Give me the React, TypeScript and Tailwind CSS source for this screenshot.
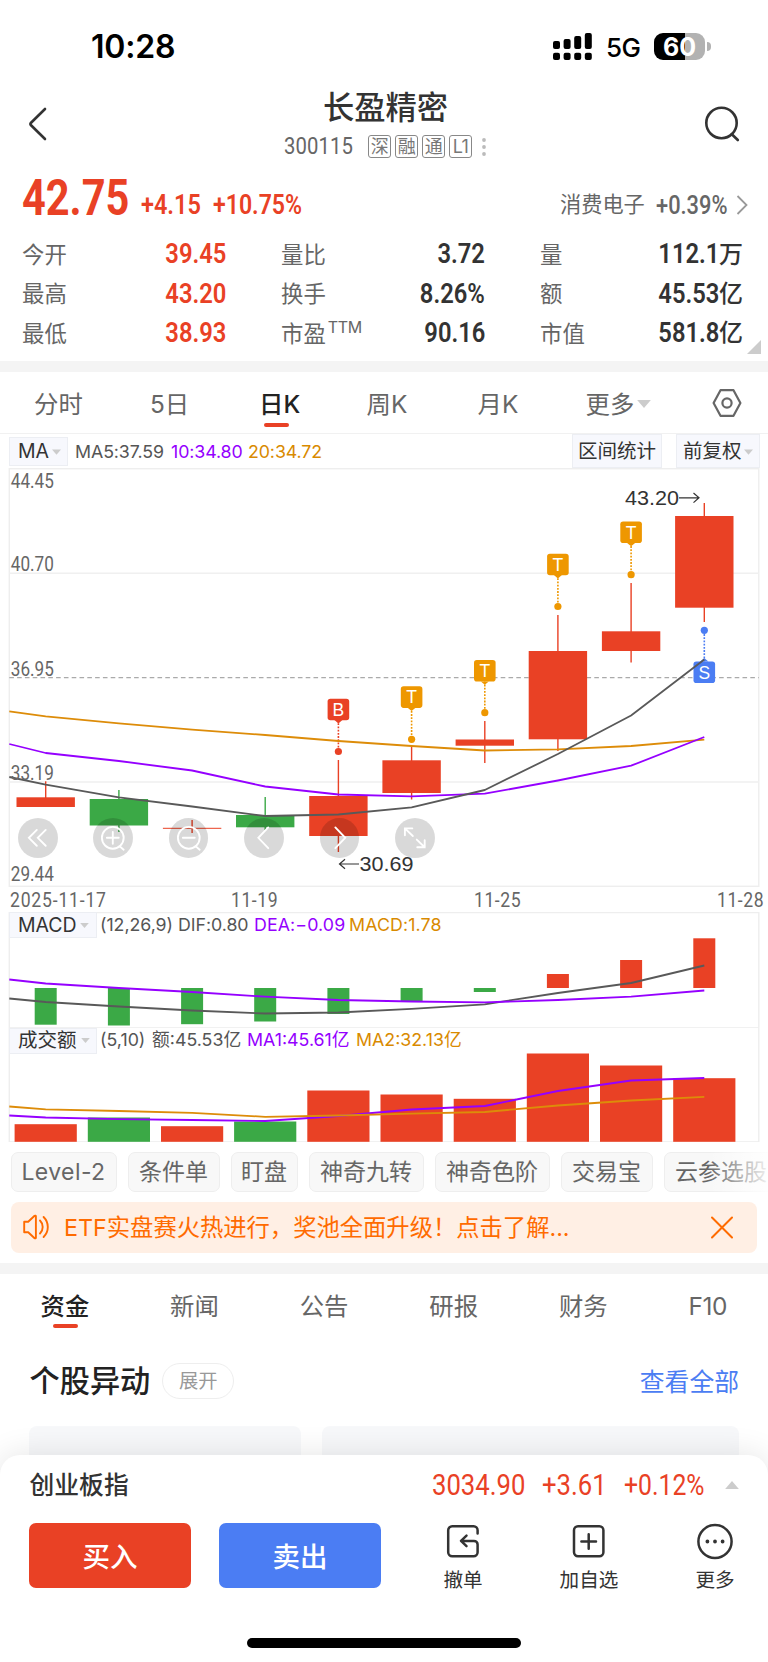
import type { ReactNode } from 'react'
import clsx from 'clsx'

const RED = '#e94125'
const GREEN = '#3ba946'
const ORANGE = '#ee9700'
const BLUE = '#4b7df3'

// center x of every trading day
const days = [45.7, 118.9, 192.1, 265.2, 338.4, 411.6, 484.8, 557.9, 631.1, 704.3]

const candles = [
  { color: RED, top: 797.3, bottom: 807, high: 781.3, low: 807 },
  { color: GREEN, top: 799, bottom: 825.5, high: 790, low: 832 },
  { color: RED, top: 827.8, bottom: 828.8, high: 820, low: 833 },
  { color: GREEN, top: 815, bottom: 827.3, high: 797, low: 830 },
  { color: RED, top: 796, bottom: 836, high: 760, low: 852 },
  { color: RED, top: 760.3, bottom: 793, high: 747, low: 799.5 },
  { color: RED, top: 739.5, bottom: 745.7, high: 721, low: 763 },
  { color: RED, top: 651, bottom: 739.3, high: 615, low: 751 },
  { color: RED, top: 631.3, bottom: 651, high: 583, low: 662.5 },
  { color: RED, top: 516, bottom: 607.7, high: 503, low: 622 },
]

const ma5 = [777, 784.7, 797.3, 806.5, 816, 814.5, 807.3, 790, 754, 715.5, 659.5]
const ma10 = [744, 753, 761, 770.5, 786.5, 794.5, 796.3, 793.7, 780.5, 765.7, 737]
const ma20 = [711.3, 716.3, 723.3, 729.7, 735, 741, 746, 750.5, 749.3, 746, 739.7]

const macd = [1024.7, 1025.5, 1024.2, 1021.5, 1014, 1002, 992, 974, 960, 938.3]
const dea = [979.5, 983.5, 988, 992, 996.7, 1000, 1001.5, 1002.3, 1000, 996.7, 990.5]
const dif = [998.5, 1002, 1006.5, 1010.5, 1013.5, 1012.5, 1008.8, 1004.3, 993, 983, 965.5]

const volume = [1123.7, 1117, 1125.7, 1121, 1090, 1094, 1098.3, 1053, 1065, 1077.7]
const vol5 = [1115, 1117, 1118.7, 1119.5, 1120.5, 1115.5, 1109, 1105.5, 1090.5, 1080, 1077.5]
const vol10 = [1106, 1108.8, 1110.5, 1112.3, 1116.3, 1115, 1113.2, 1111.5, 1105, 1100, 1096.3]

const priceLabels = [
  { text: '44.45', y: 488 },
  { text: '40.70', y: 571.2 },
  { text: '36.95', y: 675.5 },
  { text: '33.19', y: 779.7 },
  { text: '29.44', y: 881 },
]

const markers = [
  { letter: 'B', day: 4, box: 698.7, dot: 751.5, color: RED },
  { letter: 'T', day: 5, box: 686.3, dot: 739.3, color: ORANGE },
  { letter: 'T', day: 6, box: 660, dot: 712.7, color: ORANGE },
  { letter: 'T', day: 7, box: 553.7, dot: 606.5, color: ORANGE },
  { letter: 'T', day: 8, box: 521.5, dot: 574.7, color: ORANGE },
  { letter: 'S', day: 9, box: 661.5, dot: 630.3, color: BLUE },
]

const stats = [
  [
    { label: '今开', value: '39.45' },
    { label: '最高', value: '43.20' },
    { label: '最低', value: '38.93' },
  ],
  [
    { label: '量比', value: '3.72' },
    { label: '换手', value: '8.26%' },
    { label: '市盈', sup: 'TTM', value: '90.16' },
  ],
  [
    { label: '量', value: '112.1', unit: '万' },
    { label: '额', value: '45.53', unit: '亿' },
    { label: '市值', value: '581.8', unit: '亿' },
  ],
]

const periods = [
  { name: '分时', width: 'w-[116px]' },
  { name: '5日', width: 'w-[109px]' },
  { name: '日K', width: 'w-[107.5px]' },
  { name: '周K', width: 'w-[111px]' },
  { name: '月K', width: 'w-[108px]' },
]

const tools = [
  { name: 'Level-2', width: 'w-[106px]' },
  { name: '条件单', width: 'w-[92px]' },
  { name: '盯盘', width: 'w-[67px]' },
  { name: '神奇九转', width: 'w-[115px]' },
  { name: '神奇色阶', width: 'w-[115px]' },
  { name: '交易宝', width: 'w-[92px]' },
  { name: '云参选股', width: 'w-[115px]' },
]

const toPoints = (ys: number[]) => ys.map((y, i) => `${i === 0 ? 9.3 : days[i - 1]},${y}`).join(' ')

function Line({ ys, color }: { ys: number[]; color: string }) {
  return <polyline points={toPoints(ys)} fill="none" stroke={color} strokeWidth="1.8" strokeLinejoin="round" />
}

// condensed digits
function Digits({ children, className, right }: { children: ReactNode; className?: string; right?: boolean }) {
  return (
    <span
      className={clsx(
        "inline-block shrink-0 whitespace-nowrap font-['Roboto','Liberation_Sans',sans-serif]",
        right ? 'origin-right' : 'origin-left',
        className,
      )}
    >
      {children}
    </span>
  )
}

function Caret({ className }: { className?: string }) {
  return (
    <svg className={clsx('shrink-0', className)} viewBox="0 0 12 7" fill="#ccc">
      <path d="M0 0h12L6 7z" />
    </svg>
  )
}

function StatusBar() {
  return (
    <div className="flex h-[92px] items-center pl-[91px] pt-px text-black">
      <span className="w-[462px] text-[32px] font-semibold tracking-[-0.2px]">10:28</span>
      <svg className="h-7 w-10 shrink-0" viewBox="0 0 40 28">
        {[8, 6, 3, 0].map((top, i) => (
          <g key={top}>
            <rect x={i * 10.6} y={top} width="7" height={16 - top} rx="2" />
            <rect x={i * 10.6} y="19.7" width="7" height="7.3" rx="2" />
          </g>
        ))}
      </svg>
      <span className="ml-[13px] w-12 shrink-0 pt-px text-[26px] font-medium tracking-[-0.6px]">5G</span>
      <div className="flex h-[27px] w-[51px] shrink-0 items-center justify-center rounded-[9px] bg-[linear-gradient(90deg,#000_60%,#b2b2b2_60%)] text-[25px] font-bold leading-[32px] text-white">
        60
      </div>
      <div className="ml-[2px] h-[9px] w-[4px] rounded-r-full bg-[#b2b2b2]" />
    </div>
  )
}

function Header() {
  return (
    <header className="flex h-[79px] items-start pl-[28px]">
      <svg className="mt-[14px] h-[36px] w-5" viewBox="0 0 20 36" fill="none" stroke="#333" strokeWidth="2.6" strokeLinecap="round" strokeLinejoin="round">
        <path d="M17 3 2.8 17a1.4 1.4 0 0 0 0 2L17 33" />
      </svg>
      <div className="ml-[236px] flex w-[203px] flex-col">
        <h1 className="h-[30px] pt-px text-center text-[31.3px] font-medium leading-[30px] text-[#333]">长盈精密</h1>
        <div className="flex h-[49px] items-center gap-1 text-[#666]">
          <Digits className="w-[80px] scale-x-[0.86] text-[23.6px] tracking-[0.1px]">300115</Digits>
          {['深', '融', '通', 'L1'].map((tag) => (
            <span
              key={tag}
              className="flex h-[23px] w-[23px] shrink-0 items-center justify-center rounded-[3px] border-[1.5px] border-[#888] text-[18px] leading-none tracking-[-0.5px] text-[#777]"
            >
              {tag}
            </span>
          ))}
          <svg className="ml-[6px] h-5 w-1 shrink-0" viewBox="0 0 4 20" fill="#bbb">
            <circle cx="2" cy="3" r="1.9" />
            <circle cx="2" cy="10" r="1.9" />
            <circle cx="2" cy="17" r="1.9" />
          </svg>
        </div>
      </div>
      <svg className="ml-[217px] mt-[14px] h-[36px] w-[36px]" viewBox="0 0 36 36" fill="none" stroke="#333" strokeWidth="2.6" strokeLinecap="round">
        <circle cx="17.5" cy="17" r="15.2" />
        <path d="m27.8 28.2 6 5.8" />
      </svg>
    </header>
  )
}

function Quote() {
  return (
    <section className="relative h-[190px]">
      <div className="flex h-[52px] items-center pl-[22px]">
        <Digits className="w-[119px] scale-x-[0.83] pt-[3px] text-[50px] font-bold text-[#e94125]">42.75</Digits>
        <Digits className="w-[72px] scale-x-[0.87] pt-[17px] text-[27px] font-semibold text-[#e94125]">+4.15</Digits>
        <Digits className="w-[347px] scale-x-[0.855] pt-[17px] text-[27px] font-semibold text-[#e94125]">+10.75%</Digits>
        <span className="w-[96px] pt-[15px] text-[21.2px] text-[#666]">消费电子</span>
        <Digits className="w-[80px] scale-x-[0.84] pt-[17px] text-[26px] font-medium text-[#666]">+0.39%</Digits>
        <svg className="mt-[16px] h-5 w-3" viewBox="0 0 12 20" fill="none" stroke="#999" strokeWidth="1.8">
          <path d="m1.5 1 9 9-9 9" />
        </svg>
      </div>
      <div className="mt-[12px] grid grid-cols-[204px_204px_203px] gap-x-[55px] pl-[22px]">
        {stats.map((column) => (
          <dl key={column[0].label}>
            {column.map((item) => (
              <div key={item.label} className="flex h-[39.4px] items-center justify-between">
                <dt className="flex text-[22.4px] text-[#666]">
                  {item.label}
                  {'sup' in item && <span className="-mt-[2px] ml-[2px] text-[16px] leading-[24px] tracking-[-0.3px]">{item.sup}</span>}
                </dt>
                <dd className={clsx('flex items-center font-semibold', column === stats[0] ? 'text-[#e94125]' : 'text-[#333]')}>
                  <Digits right className="scale-x-[0.88] text-[27px]">
                    {item.value}
                  </Digits>
                  {'unit' in item && <span className="text-[24px] font-medium">{item.unit}</span>}
                </dd>
              </div>
            ))}
          </dl>
        ))}
      </div>
      <div className="absolute bottom-[7px] right-[7px] h-[14px] w-[14px] bg-[#ccc] [clip-path:polygon(100%_0,100%_100%,0_100%)]" />
    </section>
  )
}

function PeriodTabs() {
  return (
    <nav className="flex h-[62px] items-center border-b-[1.5px] border-[#f1f1f1] pl-[34px] pt-[3px] text-[24.4px] text-[#666]">
      {periods.map(({ name, width }) => (
        <div key={name} className={width}>
          <span className={clsx('relative', name === '日K' && 'font-medium text-[#222]')}>
            {name}
            {name === '日K' && <i className="absolute -bottom-[8px] left-[5px] h-[4px] w-[25px] rounded-full bg-[#e94125]" />}
          </span>
        </div>
      ))}
      <div className="flex w-[126px] items-center gap-[3px]">
        更多
        <Caret className="h-[8px] w-[14px]" />
      </div>
      <svg className="-mt-[3px] h-[30px] w-[30px]" viewBox="0 0 30 30" fill="none" stroke="#666" strokeWidth="2.2" strokeLinejoin="round">
        <path d="M8.5 2.2h13L28.4 15l-6.9 12.8h-13L1.6 15z" />
        <circle cx="15" cy="15" r="4.6" />
      </svg>
    </nav>
  )
}

function Chip({ children, className }: { children: ReactNode; className?: string }) {
  return (
    <span className={clsx('flex shrink-0 items-center border border-[#eceef3] bg-[#f7f8fd] text-[19.5px] text-[#333]', className)}>
      {children}
    </span>
  )
}

function MaLegend() {
  return (
    <div className="flex h-[34px] items-center pl-[9px] text-[17.8px] tracking-[-0.1px]">
      <Chip className="h-[29px] w-[59px] gap-[3px] pl-2 pt-px">
        MA
        <Caret className="h-[6px] w-[9px]" />
      </Chip>
      <span className="ml-[7px] w-[96px] pt-[2px] text-[#555]">MA5:37.59</span>
      <span className="w-[77px] pt-[2px] text-[#9500ff]">10:34.80</span>
      <span className="w-[324px] pt-[2px] text-[#d98a00]">20:34.72</span>
      <Chip className="h-[34px] w-[90px] justify-center pt-[2px] tracking-normal">区间统计</Chip>
      <Chip className="ml-[14px] h-[34px] w-[84px] gap-[2px] pl-[6px] pt-[2px] tracking-normal">
        前复权
        <Caret className="h-[6px] w-[9px]" />
      </Chip>
    </div>
  )
}

function PriceChart() {
  return (
    <svg className="block h-[419px] w-[768px]" viewBox="0 468 768 419">
      <rect x="9.3" y="468.7" width="749.5" height="417.6" fill="none" stroke="#eee" strokeWidth="1.4" />
      <path d="M9.3 573.3h749.5M9.3 782h749.5" stroke="#f0f0f0" strokeWidth="1.4" />
      <path d="M9.3 677.6h749.5" stroke="#aaa" strokeWidth="1.2" strokeDasharray="4.6 3.2" />

      {candles.map((c, i) => (
        <g key={days[i]} fill={c.color}>
          <rect x={days[i] - 0.7} y={c.high} width="1.4" height={c.low - c.high} />
          <rect x={days[i] - 29.2} y={c.top} width="58.4" height={c.bottom - c.top} />
        </g>
      ))}

      {markers.map(({ letter, day, box, dot, color }) => {
        const x = days[day]
        const tip = letter === 'S' ? box : box + 21.4
        const dir = letter === 'S' ? -1 : 1
        return (
          <g key={day} fill={color} className="font-['Liberation_Sans',sans-serif]">
            <path d={`M${x} ${tip}V${dot}`} stroke={color} strokeWidth="1.6" strokeDasharray="1.8 1.4" />
            <circle cx={x} cy={dot} r="3.6" />
            <rect x={x - 10.8} y={box} width="21.6" height="21.6" rx="2.8" />
            <path d={`M${x - 4} ${tip}h8l-4 ${3.4 * dir}z`} />
            <text x={x} y={box + 17} fontSize="17.5" fill="#fff" textAnchor="middle">
              {letter}
            </text>
          </g>
        )
      })}

      <Line ys={ma20} color="#dd8c09" />
      <Line ys={ma10} color="#9500ff" />
      <Line ys={ma5} color="#595959" />

      <g fill="#666" fontSize="20" className="font-['Roboto',sans-serif]">
        {priceLabels.map(({ text, y }) => (
          <text key={text} x="10.8" y={y} textLength="43" lengthAdjust="spacingAndGlyphs">
            {text}
          </text>
        ))}
      </g>

      <g fill="#333" fontSize="21" className="font-['Liberation_Sans',sans-serif]">
        <text x="625" y="505.2" textLength="54" lengthAdjust="spacingAndGlyphs">43.20</text>
        <text x="359.5" y="871.4" textLength="54" lengthAdjust="spacingAndGlyphs">30.69</text>
        <path d="M679 497.8h20M693.5 493l5.5 4.8-5.5 4.8M359 864h-19.5M345 859.2l-5.5 4.8 5.5 4.8" fill="none" stroke="#333" strokeWidth="1.2" />
      </g>
    </svg>
  )
}

const controls = [
  'M-1-8l-8 8 8 8M8-8L0 0l8 8',
  'M-6 0H6M0-6V6M6.8 8.4L11 12M11 0A11 11 0 1 1-11 0A11 11 0 1 1 11 0',
  'M-6 0H6M6.8 8.4L11 12M11 0A11 11 0 1 1-11 0A11 11 0 1 1 11 0',
  'M4.5-10.5L-5.5 0l10 10.5',
  'M-4.5-10.5L5.5 0l-10 10.5',
  'M-10-2.5V-9.5H-2.5M-10-9.5L-2-1.8M10 2.5V9.5H2.5M10 9.5L2 1.8',
]

function ChartControls() {
  return (
    <div className="absolute left-[18px] top-[350px] flex gap-[35.8px]">
      {controls.map((d) => (
        <button key={d} className="h-[39.6px] w-[39.6px] rounded-full bg-black/15">
          <svg viewBox="-20 -20 40 40" fill="none" stroke="#fff" strokeWidth="1.9" strokeLinecap="round">
            <path d={d} />
          </svg>
        </button>
      ))}
    </div>
  )
}

function Dates() {
  return (
    <div className="flex h-[25px] items-center pl-[10px] text-[20px] text-[#666]">
      <Digits className="w-[221px] scale-x-[0.88] tracking-[0.9px]">2025-11-17</Digits>
      <Digits className="w-[243px] scale-x-[0.88] tracking-[0.6px]">11-19</Digits>
      <Digits className="w-[243px] scale-x-[0.88] tracking-[0.6px]">11-25</Digits>
      <Digits className="w-[50px] scale-x-[0.88] tracking-[0.6px]">11-28</Digits>
    </div>
  )
}

function MacdPanel() {
  return (
    <div className="relative h-[114.5px]">
      <svg className="absolute inset-0 h-[114.5px] w-[768px]" viewBox="0 912 768 114.5">
        <path d="M9.3 1027V912.5h749.5V1027" fill="none" stroke="#eee" strokeWidth="1.4" />
        {macd.map((y, i) => (
          <rect key={days[i]} x={days[i] - 11} y={Math.min(y, 988)} width="22" height={Math.abs(y - 988)} fill={y > 988 ? GREEN : RED} />
        ))}
        <Line ys={dif} color="#595959" />
        <Line ys={dea} color="#9500ff" />
      </svg>
      <div className="relative flex h-[26px] items-center pl-[9px] text-[17.8px] tracking-[-0.05px]">
        <Chip className="h-[26px] w-[88px] gap-[3px] pl-2 pt-px">
          MACD
          <Caret className="h-[5px] w-[9px]" />
        </Chip>
        <span className="ml-[3px] w-[78px] text-[#555]">(12,26,9)</span>
        <span className="w-[76px] text-[#555]">DIF:0.80</span>
        <span className="w-[95px] tracking-[0.1px] text-[#9500ff]">DEA:−0.09</span>
        <span className="tracking-[0.1px] text-[#d98a00]">MACD:1.78</span>
      </div>
    </div>
  )
}

function VolumePanel() {
  return (
    <div className="relative h-[115px]">
      <svg className="absolute inset-0 h-[115.5px] w-[768px]" viewBox="0 1026.5 768 115.5">
        <rect x="9.3" y="1026.6" width="749.5" height="114.8" fill="none" stroke="#eee" strokeWidth="1.4" />
        {volume.map((y, i) => (
          <rect key={days[i]} x={days[i] - 31.1} y={y} width="62.2" height={1141.3 - y} fill={i === 1 || i === 3 ? GREEN : RED} />
        ))}
        <Line ys={vol5} color="#9500ff" />
        <Line ys={vol10} color="#dd8c09" />
      </svg>
      <div className="relative flex h-[27px] items-center pl-[9px] pt-px text-[17.8px]">
        <Chip className="h-[26px] w-[88px] gap-[4px] pl-[8px]">
          成交额
          <Caret className="h-[5px] w-[9px]" />
        </Chip>
        <span className="ml-[3px] w-[52px] text-[#555]">(5,10)</span>
        <span className="w-[95px] text-[#555]">额:45.53亿</span>
        <span className="w-[109px] text-[#9500ff]">MA1:45.61亿</span>
        <span className="text-[#d98a00]">MA2:32.13亿</span>
      </div>
    </div>
  )
}

function Tools() {
  return (
    <div className="relative mt-[10px] flex h-[40px] gap-[11px] overflow-hidden pl-[11px] text-[23px] text-[#666]">
      {tools.map(({ name, width }, i) => (
        <span
          key={name}
          className={clsx(
            'flex h-[40px] shrink-0 items-center justify-center whitespace-nowrap rounded-[7px] border border-[#eee] bg-[#f8f8f8] pr-px pt-px',
            width,
            i === 0 && 'tracking-[0.4px]',
          )}
        >
          {name}
        </span>
      ))}
      <div className="absolute inset-y-0 right-0 w-[60px] bg-linear-to-r from-white/0 to-white/90" />
    </div>
  )
}

function Banner() {
  return (
    <div className="ml-[11px] mt-[10px] flex h-[51px] w-[746px] items-center rounded-[8px] bg-[#ffefe4] pl-[12px] text-[23.3px] text-[#ff6b00]">
      <svg className="h-[26px] w-[27px]" viewBox="0 0 27 26" fill="none" stroke="#ff6b00" strokeWidth="1.9" strokeLinejoin="round" strokeLinecap="round">
        <path d="M1.2 7.800h4l6.400-6a.8.8 0 0 1 1.300.6v21.200a.8.8 0 0 1-1.300.6l-6.400-6h-4z" />
        <path d="M17 6.500c3.600 3.600 3.600 9.400 0 13M20.600 3c5.600 5.600 5.600 14.400 0 20" />
      </svg>
      <span className="ml-[14px] w-[647px] pt-[2px]">ETF实盘赛火热进行，奖池全面升级！点击了解...</span>
      <svg className="h-[23px] w-[22px]" viewBox="0 0 22 23" stroke="#ff6b00" strokeWidth="2" strokeLinecap="round">
        <path d="m1 1.5 20 20M21 1.5l-20 20" />
      </svg>
    </div>
  )
}

function NewsTabs() {
  return (
    <nav className="flex h-[64px] items-center pl-[40.5px] pt-[2px] text-[24.4px] text-[#666]">
      {['资金', '新闻', '公告', '研报', '财务', 'F10'].map((name, i) => (
        <div key={name} className="w-[129.6px] shrink-0">
          <span className={clsx('relative', i === 0 && 'font-medium text-[#222]', i === 5 && 'tracking-[-0.4px]')}>
            {name}
            {i === 0 && <i className="absolute -bottom-[7px] left-[12px] h-[4px] w-[25px] rounded-full bg-[#e94125]" />}
          </span>
        </div>
      ))}
    </nav>
  )
}

function Moves() {
  return (
    <section>
      <div className="flex h-[86px] items-center pl-[29.5px] pr-[29px]">
        <h2 className="pt-[3px] text-[30.2px] font-medium text-[#222]">个股异动</h2>
        <span className="ml-[12px] flex h-[36px] w-[72px] items-center justify-center rounded-full border-[1.5px] border-[#eee] pt-[2px] text-[19.3px] text-[#999]">
          展开
        </span>
        <a className="ml-auto pt-[4px] text-[24.8px] text-[#4b7df3]">查看全部</a>
      </div>
      <div className="mt-[2px] flex gap-[21px] pl-[29px]">
        <div className="h-[120px] w-[272px] rounded-[8px] bg-[#f7f8fa]" />
        <div className="h-[120px] w-[417px] rounded-[8px] bg-[#f7f8fa]" />
      </div>
    </section>
  )
}

function Action({ label, className, children }: { label: string; className: string; children: ReactNode }) {
  return (
    <div className={clsx('flex flex-col items-center text-[19.6px] font-normal text-[#333]', className)}>
      <svg className="h-[38px] w-[38px]" viewBox="0 0 38 38" fill="none" stroke="#333" strokeWidth="2.5" strokeLinecap="round" strokeLinejoin="round">
        {children}
      </svg>
      <span className="mt-[3px] leading-[32px]">{label}</span>
    </div>
  )
}

function TradeSheet() {
  return (
    <footer className="absolute bottom-0 left-0 h-[207px] w-[768px] rounded-t-[20px] bg-white shadow-[0_0_32px_rgba(0,0,0,0.11)]">
      <div className="flex h-[60px] items-center pl-[29.5px] text-[29.5px] text-[#e94125]">
        <span className="w-[402px] pt-[2px] text-[24.8px] font-medium text-[#333]">创业板指</span>
        <Digits className="w-[110px] scale-x-[0.87]">3034.90</Digits>
        <Digits className="w-[82px] scale-x-[0.87]">+3.61</Digits>
        <Digits className="w-[101px] scale-x-[0.84]">+0.12%</Digits>
        <Caret className="h-[8px] w-[14px] rotate-180" />
      </div>
      <div className="flex items-start pl-[29px] pt-[8px] text-[27.5px] font-medium text-white">
        <button className="h-[65px] w-[162px] rounded-[7px] bg-[#e94125] pt-[4px]">买入</button>
        <button className="ml-[28px] h-[65px] w-[162px] rounded-[7px] bg-[#4b7df3] pt-[4px]">卖出</button>
        <Action label="撤单" className="ml-[52px] w-[60px]">
          <path d="M33.6 10.600V7.200a4 4 0 0 0-4-4H8.200a4 4 0 0 0-4 4v22.100a4 4 0 0 0 4 4h21.400a4 4 0 0 0 4-4V21.500a3.600 3.600 0 0 0-3.600-3.600H17.500M22.500 12.700l-5.500 5.200 5.500 5.200" />
        </Action>
        <Action label="加自选" className="ml-[65px] w-[62px]">
          <rect x="4" y="3.2" width="29.400" height="30.1" rx="4" />
          <path d="M18.700 11.200v14.600M11.400 18.500H26" />
        </Action>
        <Action label="更多" className="ml-[65px] w-[60px]">
          <circle cx="19" cy="18.5" r="16.6" />
          <path d="M11.400 18.500h.01M19 18.500h.01M26.600 18.500h.01" strokeWidth="3.800" />
        </Action>
      </div>
      <div className="absolute bottom-[14.5px] left-[247px] h-[9.5px] w-[274px] rounded-full bg-black" />
    </footer>
  )
}

export default function App() {
  return (
    <div className="relative h-[1662px] w-[768px] overflow-hidden bg-white font-['Inter','Noto_Sans_CJK_SC',sans-serif]">
      <StatusBar />
      <Header />
      <Quote />
      <div className="h-[11px] bg-[#f4f4f4]" />
      <PeriodTabs />
      <MaLegend />
      <div className="relative">
        <PriceChart />
        <ChartControls />
      </div>
      <Dates />
      <MacdPanel />
      <VolumePanel />
      <Tools />
      <Banner />
      <div className="mt-[10px] h-[11px] bg-[#f4f4f4]" />
      <NewsTabs />
      <Moves />
      <TradeSheet />
    </div>
  )
}
